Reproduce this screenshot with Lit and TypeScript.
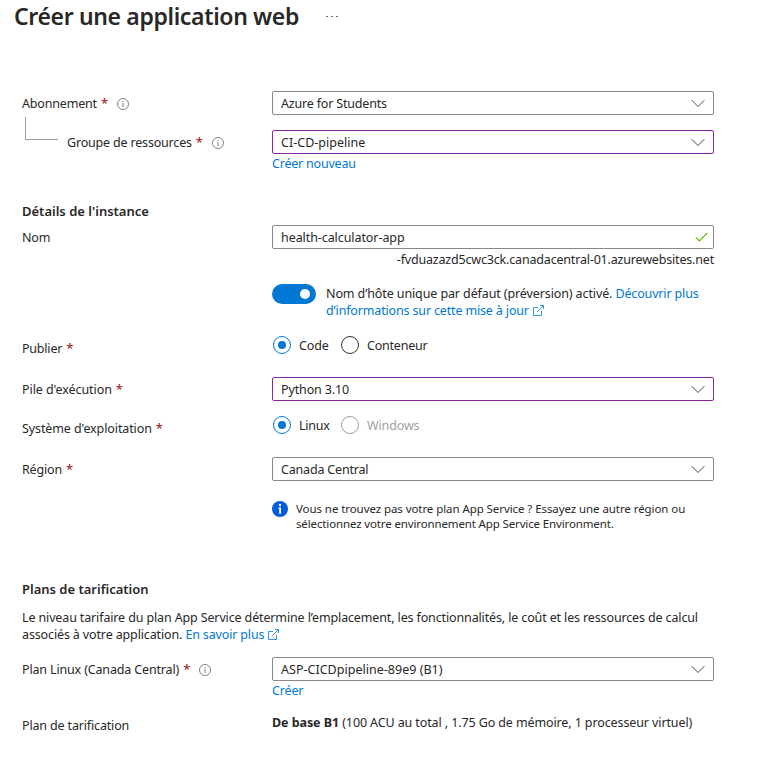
import { LitElement, html, css, svg, nothing } from "lit";
import { customElement, property } from "lit/decorators.js";

const base = css`
  * { box-sizing: border-box; }
  .k0 { letter-spacing: 0.02px; }
  .k1 { letter-spacing: -0.075px; }
  .k2 { letter-spacing: -0.11px; }
  .k3 { letter-spacing: -0.135px; }
  .k4 { letter-spacing: -0.155px; }
  .k5 { letter-spacing: -0.18px; }
  .k6 { letter-spacing: -0.21px; }
  .k7 { letter-spacing: -0.25px; }
  .link { color: #0078d4; text-decoration: none; }
`;

const infoOutline = html`<svg class="info" width="12" height="12" viewBox="0 0 12 12" fill="none">
  <circle cx="6" cy="6" r="5.5" stroke="#797775" stroke-width="0.9" />
  <path d="M6 5v4M6 3v1.1" stroke="#8a8886" stroke-width="1.1" />
</svg>`;

const chevron = svg`<path d="M0.7 1.2L7 7.5L13.3 1.2" stroke="#484644" stroke-width="1" />`;

const external = html`<svg class="ext" width="11" height="11" viewBox="0 0 11 11" fill="none" stroke="#0078d4" stroke-width="0.8">
  <path d="M5 2.5H0.5V10.5H8.5V6" />
  <path d="M7 0.5H10.5V4M10.4 0.6L4 7" />
</svg>`;

@customElement("field-label")
class FieldLabel extends LitElement {
  @property() text = "";
  @property() kern = "k3";
  @property({ type: Boolean }) required = false;
  @property({ type: Boolean }) info = false;
  static styles = [base, css`
    :host { display: flex; align-items: center; height: 24px; padding-top: 2px; box-sizing: border-box;
      line-height: 18px; white-space: nowrap; }
    .star { color: #a4262c; margin: -3px 0 0 4px; font-size: 13px; font-weight: 500; width: 7px; }
    .info { margin-left: 9px; }
  `];
  render() {
    return html`<span class=${this.kern}>${this.text}</span>
      ${this.required ? html`<span class="star">*</span>` : nothing}
      ${this.info ? infoOutline : nothing}`;
  }
}

@customElement("field-box")
class FieldBox extends LitElement {
  @property() value = "";
  @property() kern = "k3";
  @property({ type: Boolean }) valid = false;
  @property({ type: Boolean, reflect: true }) edited = false;
  static styles = [base, css`
    :host { display: flex; align-items: center; justify-content: space-between; box-sizing: border-box;
      width: 442px; height: 24px; border: 1px solid #8a8886; border-radius: 2px; padding: 0 8px;
      line-height: 18px; white-space: nowrap; }
    :host([edited]) { border-color: #8a25a6; }
    span { padding-top: 2px; }
    .check { margin-right: -3px; }
  `];
  render() {
    return html`<span class=${this.kern}>${this.value}</span>
      ${this.valid
        ? html`<svg class="check" width="13" height="10" viewBox="0 0 13 10" fill="none"><path d="M0.8 5.4L4.4 8.8L12.4 0.8" stroke="#6bb700" stroke-width="1.2" /></svg>`
        : html`<svg width="14" height="9" viewBox="0 0 14 9" fill="none">${chevron}</svg>`}`;
  }
}

@customElement("radio-option")
class RadioOption extends LitElement {
  @property() label = "";
  @property() kern = "k3";
  @property({ type: Boolean, reflect: true }) checked = false;
  @property({ type: Boolean, reflect: true }) disabled = false;
  static styles = [base, css`
    :host { display: flex; align-items: center; gap: 8px; height: 18px; line-height: 18px; }
    .ring { width: 18px; height: 18px; border: 1px solid #323130; border-radius: 50%; display: grid; place-items: center; }
    :host([checked]) .ring { border-color: #0078d4; }
    .dot { width: 8px; height: 8px; border-radius: 50%; background: #0078d4; }
    .name { padding-top: 2px; }
    :host([checked]) .name { width: 30px; }
    :host([disabled]) { color: #a19f9d; }
    :host([disabled]) .ring { border-color: #a19f9d; }
  `];
  render() {
    return html`<span class="ring">${this.checked ? html`<span class="dot"></span>` : nothing}</span>
      <span class="name ${this.kern}">${this.label}</span>`;
  }
}

@customElement("app-root")
class AppRoot extends LitElement {
  static styles = [base, css`
    :host { display: block; height: 757px; overflow: hidden; background: #fff; color: #292827;
      font-family: "Noto Sans", sans-serif; font-size: 12.5px; line-height: 17px; }
    header { display: flex; align-items: center; height: 34px; padding-left: 14px; }
    h1 { margin: -2px 0 0; font-size: 23px; font-weight: 600; line-height: 34px; letter-spacing: -0.35px; white-space: nowrap; }
    .more { display: flex; gap: 3.5px; margin: -1px 0 0 27px; }
    .more i { width: 1.5px; height: 1.5px; border-radius: 50%; background: #605e5c; }
    main { padding: 57px 0 0 22px; }
    .row { display: grid; grid-template-columns: 250px 442px; align-items: start; white-space: nowrap; }
    h2 { margin: 0; font-size: 13px; font-weight: 600; line-height: 18px; }
    .group { display: flex; }
    .elbow { width: 33px; height: 23px; margin: -13px 9px 0 3px; border: solid #a19f9d; border-width: 0 0 1px 1px; }
    .sub { padding-top: 1px; line-height: 18px; }
    .suffix { height: 20px; line-height: 20px; margin-top: 1px; text-align: right; }
    .switch { display: flex; margin-top: 14px; }
    .track { width: 44px; height: 20px; border-radius: 10px; background: #0078d4; padding: 5px 6px 5px 28px; margin-right: 10px; }
    .knob { display: block; width: 10px; height: 10px; border-radius: 50%; background: #fff; }
    .text { margin-top: 1px; }
    .radios { display: flex; gap: 12px; padding-left: 1px; }
    .note { display: flex; gap: 8px; font-size: 11.5px; line-height: 15px; margin-top: 20px; }
    .note svg { display: block; }
    .para { margin-top: 11px; white-space: nowrap; }
    .ext { margin-left: 4px; vertical-align: -1px; }
    .r-group { margin-top: 15px; height: 72px; }
    .r-name { margin-top: 5px; height: 111px; }
    .r-publish { height: 41px; }
    .r-stack { height: 39px; }
    .r-os { height: 41px; }
    .r-region { height: 123px; }
    .r-plan { margin-top: 14px; height: 56px; }
    .low { margin-top: 1px; }
  `];
  render() {
    return html`
      <header><h1>Créer une application web</h1><span class="more"><i></i><i></i><i></i></span></header>
      <main>
        <div class="row">
          <field-label text="Abonnement" kern="k5" required info></field-label>
          <field-box value="Azure for Students" kern="k5"></field-box>
        </div>
        <div class="row r-group">
          <div class="group"><span class="elbow"></span>
            <field-label text="Groupe de ressources" kern="k5" required info></field-label></div>
          <div>
            <field-box value="CI-CD-pipeline" kern="k0" edited></field-box>
            <div class="sub"><a class="link k6">Créer nouveau</a></div>
          </div>
        </div>
        <h2>Détails de l'instance</h2>
        <div class="row r-name">
          <field-label text="Nom"></field-label>
          <div>
            <field-box value="health-calculator-app" kern="k1" valid></field-box>
            <div class="suffix k5">-fvduazazd5cwc3ck.canadacentral-01.azurewebsites.net</div>
            <div class="switch"><span class="track"><span class="knob"></span></span>
              <div class="text"><span class="k2">Nom d’hôte unique par défaut (préversion) activé. </span><a class="link k4">Découvrir plus<br>d’informations sur cette mise à jour${external}</a></div>
            </div>
          </div>
        </div>
        <div class="row r-publish">
          <field-label text="Publier" kern="k6" required></field-label>
          <div class="radios">
            <radio-option label="Code" checked></radio-option>
            <radio-option label="Conteneur" kern="k6"></radio-option>
          </div>
        </div>
        <div class="row r-stack">
          <field-label text="Pile d'exécution" kern="k1" required></field-label>
          <field-box value="Python 3.10" edited></field-box>
        </div>
        <div class="row r-os">
          <field-label text="Système d'exploitation" kern="k2" required></field-label>
          <div class="radios">
            <radio-option label="Linux" kern="k7" checked></radio-option>
            <radio-option label="Windows" disabled></radio-option>
          </div>
        </div>
        <div class="row r-region">
          <field-label text="Région" kern="k5" required></field-label>
          <div>
            <field-box value="Canada Central" kern="k5"></field-box>
            <div class="note">
              <svg width="16" height="16" viewBox="0 0 16 16"><circle cx="8" cy="8" r="8" fill="#015cda" /><circle cx="8" cy="4" r="1.2" fill="#fff" /><path d="M6.3 6.5H9V12.7H7.2V7.6H6.3Z" fill="#fff" /></svg>
              <div><span class="k1">Vous ne trouvez pas votre plan App Service ? Essayez une autre région ou</span><br><span class="k3">sélectionnez votre environnement App Service Environment.</span></div>
            </div>
          </div>
        </div>
        <h2>Plans de tarification</h2>
        <div class="para"><span class="k3">Le niveau tarifaire du plan App Service détermine l’emplacement, les fonctionnalités, le coût et les ressources de calcul</span><br><span class="k3">associés à votre application. </span><a class="link k4">En savoir plus${external}</a></div>
        <div class="row r-plan">
          <field-label text="Plan Linux (Canada Central)" kern="k4" required info></field-label>
          <div>
            <field-box value="ASP-CICDpipeline-89e9 (B1)" kern="k0"></field-box>
            <div class="sub"><a class="link k4">Créer</a></div>
          </div>
        </div>
        <div class="row">
          <field-label text="Plan de tarification" kern="k4"></field-label>
          <div class="low"><b class="k1">De base B1</b> <span class="k2">(100 ACU au total , 1.75 Go de mémoire, 1 processeur virtuel)</span></div>
        </div>
      </main>`;
  }
}
